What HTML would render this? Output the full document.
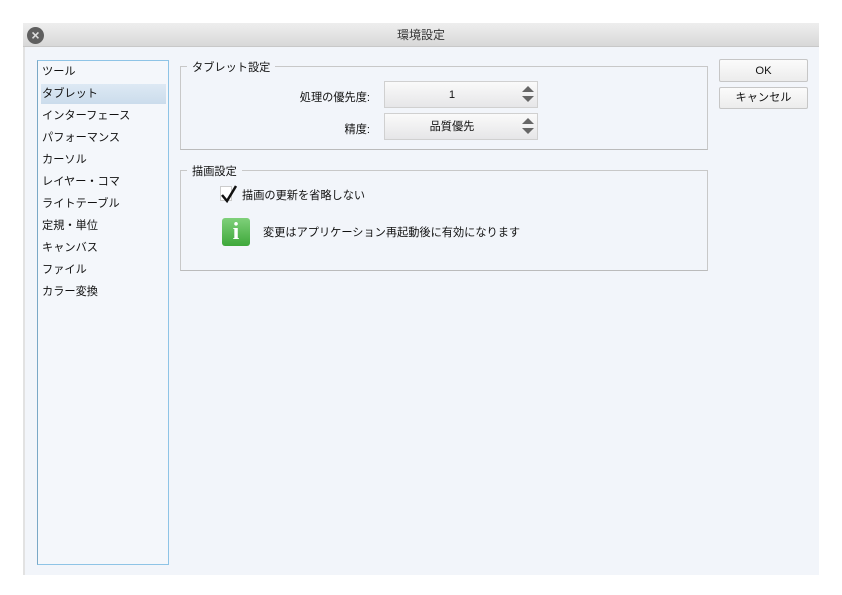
<!DOCTYPE html>
<html><head><meta charset="utf-8"><style>
*{margin:0;padding:0;box-sizing:border-box}
body{width:842px;height:595px;background:#fff;position:relative;overflow:hidden;font-family:"Liberation Sans","Noto Sans CJK JP",sans-serif;font-size:11.2px;color:#111}
.a{position:absolute}
#win{left:23px;top:23px;width:796px;height:552px;background:#f2f5fa;border-left:2px solid #e2e2e2}
#title{left:23px;top:23px;width:796px;height:24px;background:linear-gradient(#eeeeee,#d8d8d8);border-bottom:1px solid #c8c8c8;text-align:center;line-height:25px;font-size:12px;color:#333}
#close{left:27px;top:27px;width:17px;height:17px;border-radius:50%;background:#5f5f5f;color:#ddd;font-size:14px;font-weight:bold;text-align:center;line-height:17px}
#list{left:37px;top:60px;width:132px;height:505px;border:1px solid #8ec4e6;border-left-color:#7aa8c6;background:#f4f7fb}
.it{position:absolute;left:3px;width:125px;height:20px;line-height:20px;padding-left:1px}
.sel{background:linear-gradient(#dde9f4,#cbdcec)}
.grp{border:1px solid #c8c8c8;border-bottom-color:#bbb}
.gt{position:absolute;background:#f2f5fa;padding:0 5px;line-height:14px;top:0}
.spin{border:1px solid #d0d0d0;background:linear-gradient(#fafafa,#e6e6e8);text-align:center;line-height:27px}
.btn{border:1px solid #c6c6c6;background:linear-gradient(#fbfbfb,#ececec);text-align:center;border-radius:2px}
</style></head><body>
<div class="a" id="win"></div>
<div class="a" id="title">環境設定</div>
<div class="a" id="close">×</div>
<div class="a" id="list">
<div class="it" style="top:1px">ツール</div>
<div class="it sel" style="top:23px">タブレット</div>
<div class="it" style="top:45px">インターフェース</div>
<div class="it" style="top:67px">パフォーマンス</div>
<div class="it" style="top:89px">カーソル</div>
<div class="it" style="top:111px">レイヤー・コマ</div>
<div class="it" style="top:133px">ライトテーブル</div>
<div class="it" style="top:155px">定規・単位</div>
<div class="it" style="top:177px">キャンバス</div>
<div class="it" style="top:199px">ファイル</div>
<div class="it" style="top:221px">カラー変換</div>
</div>

<div class="a grp" style="left:180px;top:66px;width:528px;height:84px"></div>
<div class="a gt" style="left:187px;top:61px">タブレット設定</div>
<div class="a" style="left:260px;top:89px;width:110px;text-align:right">処理の優先度:</div>
<div class="a" style="left:260px;top:121px;width:110px;text-align:right">精度:</div>
<div class="a spin" style="left:384px;top:81px;width:154px;height:27px"><span style="margin-right:18px">1</span></div>
<div class="a spin" style="left:384px;top:113px;width:154px;height:27px"><span style="margin-right:18px">品質優先</span></div>
<svg class="a" style="left:521px;top:83px" width="14" height="22"><path d="M1 9L7 3L13 9Z" fill="#666"/><path d="M1 13L7 19L13 13Z" fill="#666"/></svg>
<svg class="a" style="left:521px;top:115px" width="14" height="22"><path d="M1 9L7 3L13 9Z" fill="#666"/><path d="M1 13L7 19L13 13Z" fill="#666"/></svg>

<div class="a grp" style="left:180px;top:170px;width:528px;height:101px"></div>
<div class="a gt" style="left:187px;top:165px">描画設定</div>
<div class="a" style="left:220px;top:186px;width:12px;height:15px;border:1px solid #ccc;background:#fff"></div>
<svg class="a" style="left:219px;top:184px" width="20" height="20"><path d="M3 11L8 17L17 2" stroke="#111" stroke-width="2.5" fill="none"/></svg>
<div class="a" style="left:242px;top:187px">描画の更新を省略しない</div>
<div class="a" style="left:222px;top:218px;width:28px;height:28px;border-radius:3px;background:linear-gradient(#7fd07a,#3ea83a);color:#fff;font-family:'Liberation Serif',serif;font-weight:bold;font-size:24px;text-align:center;line-height:28px">i</div>
<div class="a" style="left:263px;top:224px">変更はアプリケーション再起動後に有効になります</div>

<div class="a btn" style="left:719px;top:59px;width:89px;height:23px;line-height:22px">OK</div>
<div class="a btn" style="left:719px;top:87px;width:89px;height:22px;line-height:21px">キャンセル</div>
</body></html>
